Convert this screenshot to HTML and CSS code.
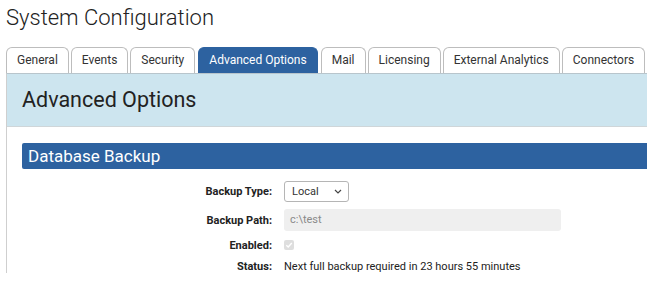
FILE: index.html
```html
<!DOCTYPE html>
<html>
<head>
<meta charset="utf-8">
<link rel="stylesheet" href="styles.css">
</head>
<body>
<div class="page">
  <h1 class="title">System Configuration</h1>
  <div class="tabs">
    <div class="tab">General</div>
    <div class="tab">Events</div>
    <div class="tab">Security</div>
    <div class="tab active">Advanced Options</div>
    <div class="tab">Mail</div>
    <div class="tab">Licensing</div>
    <div class="tab">External Analytics</div>
    <div class="tab">Connectors</div>
  </div>
  <div class="panel">
    <div class="panel-head">Advanced Options</div>
    <div class="panel-body">
      <div class="section-bar">Database Backup</div>
      <div class="form">
        <div class="label">Backup Type:</div>
        <div class="field">
          <div class="select"><span>Local</span>
            <svg class="chev" width="8" height="5" viewBox="0 0 8 5"><path d="M1 1 L4 4 L7 1" fill="none" stroke="#444" stroke-width="1.2"/></svg>
          </div>
        </div>
        <div class="label">Backup Path:</div>
        <div class="field"><div class="input">c:\test</div></div>
        <div class="label">Enabled:</div>
        <div class="field">
          <div class="check"><svg width="10" height="10" viewBox="0 0 10 10"><path d="M2.3 5.2 L4.2 7 L7.8 3" fill="none" stroke="#fff" stroke-width="1.4"/></svg></div>
        </div>
        <div class="label">Status:</div>
        <div class="field status">Next full backup required in 23 hours 55 minutes</div>
      </div>
    </div>
  </div>
</div>
</body>
</html>
```
FILE: styles.css
```css
html, body {
  margin: 0;
  padding: 0;
  background: #fff;
  overflow: hidden;
}
body {
  font-family: Roboto, "Liberation Sans", Arial, sans-serif;
  color: #222;
}
.page {
  padding-left: 6px;
  width: 660px;
}
.title {
  margin: 0;
  padding-top: 4px;
  height: 43px;
  font-size: 22px;
  font-weight: 300;
  line-height: 28px;
  color: #222;
}
.tabs {
  display: flex;
  gap: 2px;
  height: 26px;
}
.tab {
  box-sizing: border-box;
  height: 26px;
  padding: 0 10px;
  border: 1px solid #bdbdbd;
  border-bottom: none;
  border-radius: 6px 6px 0 0;
  font-size: 12px;
  line-height: 25px;
  color: #333;
  background: #fff;
  white-space: nowrap;
}
.tab.active {
  background: #2d62a0;
  border-color: #2d62a0;
  color: #fff;
  margin-left: 1px;
  margin-right: 1px;
}
.panel {
  border-left: 1px solid #cfcfcf;
  border-top: 1px solid #b8c5cc;
}
.panel-head {
  background: #cde5ef;
  height: 52px;
  line-height: 52px;
  padding-left: 15px;
  font-size: 21.5px;
  font-weight: 400;
  color: #222;
  border-bottom: 1px solid #cfd6d9;
}
.panel-body {
  padding: 16px 0 0 15px;
}
.section-bar {
  background: #2d62a0;
  color: #fff;
  height: 26px;
  line-height: 26px;
  padding-left: 6px;
  font-size: 17px;
  border-radius: 2px 0 0 2px;
}
.form {
  display: grid;
  grid-template-columns: 250px 1fr;
  column-gap: 12px;
  grid-template-rows: 21px 22px 14px 14px;
  row-gap: 7px;
  padding-top: 12px;
  align-items: center;
}
.label {
  text-align: right;
  font-size: 11px;
  font-weight: 700;
  color: #222;
}
.field {
  font-size: 11px;
  display: flex;
  align-items: center;
}
.select {
  box-sizing: border-box;
  width: 65px;
  height: 21px;
  border: 1px solid #b5b5b5;
  border-radius: 3px;
  display: flex;
  align-items: center;
  justify-content: space-between;
  padding: 0 6px 0 7px;
  font-size: 11px;
  color: #333;
}
.input {
  box-sizing: border-box;
  width: 277px;
  height: 22px;
  background: #efefef;
  border-radius: 3px;
  padding-left: 6px;
  line-height: 22px;
  font-size: 11px;
  color: #8a8a8a;
}
.check {
  width: 10px;
  height: 10px;
  border-radius: 2px;
  background: #dedede;
  display: flex;
}
.status {
  color: #222;
}
```
